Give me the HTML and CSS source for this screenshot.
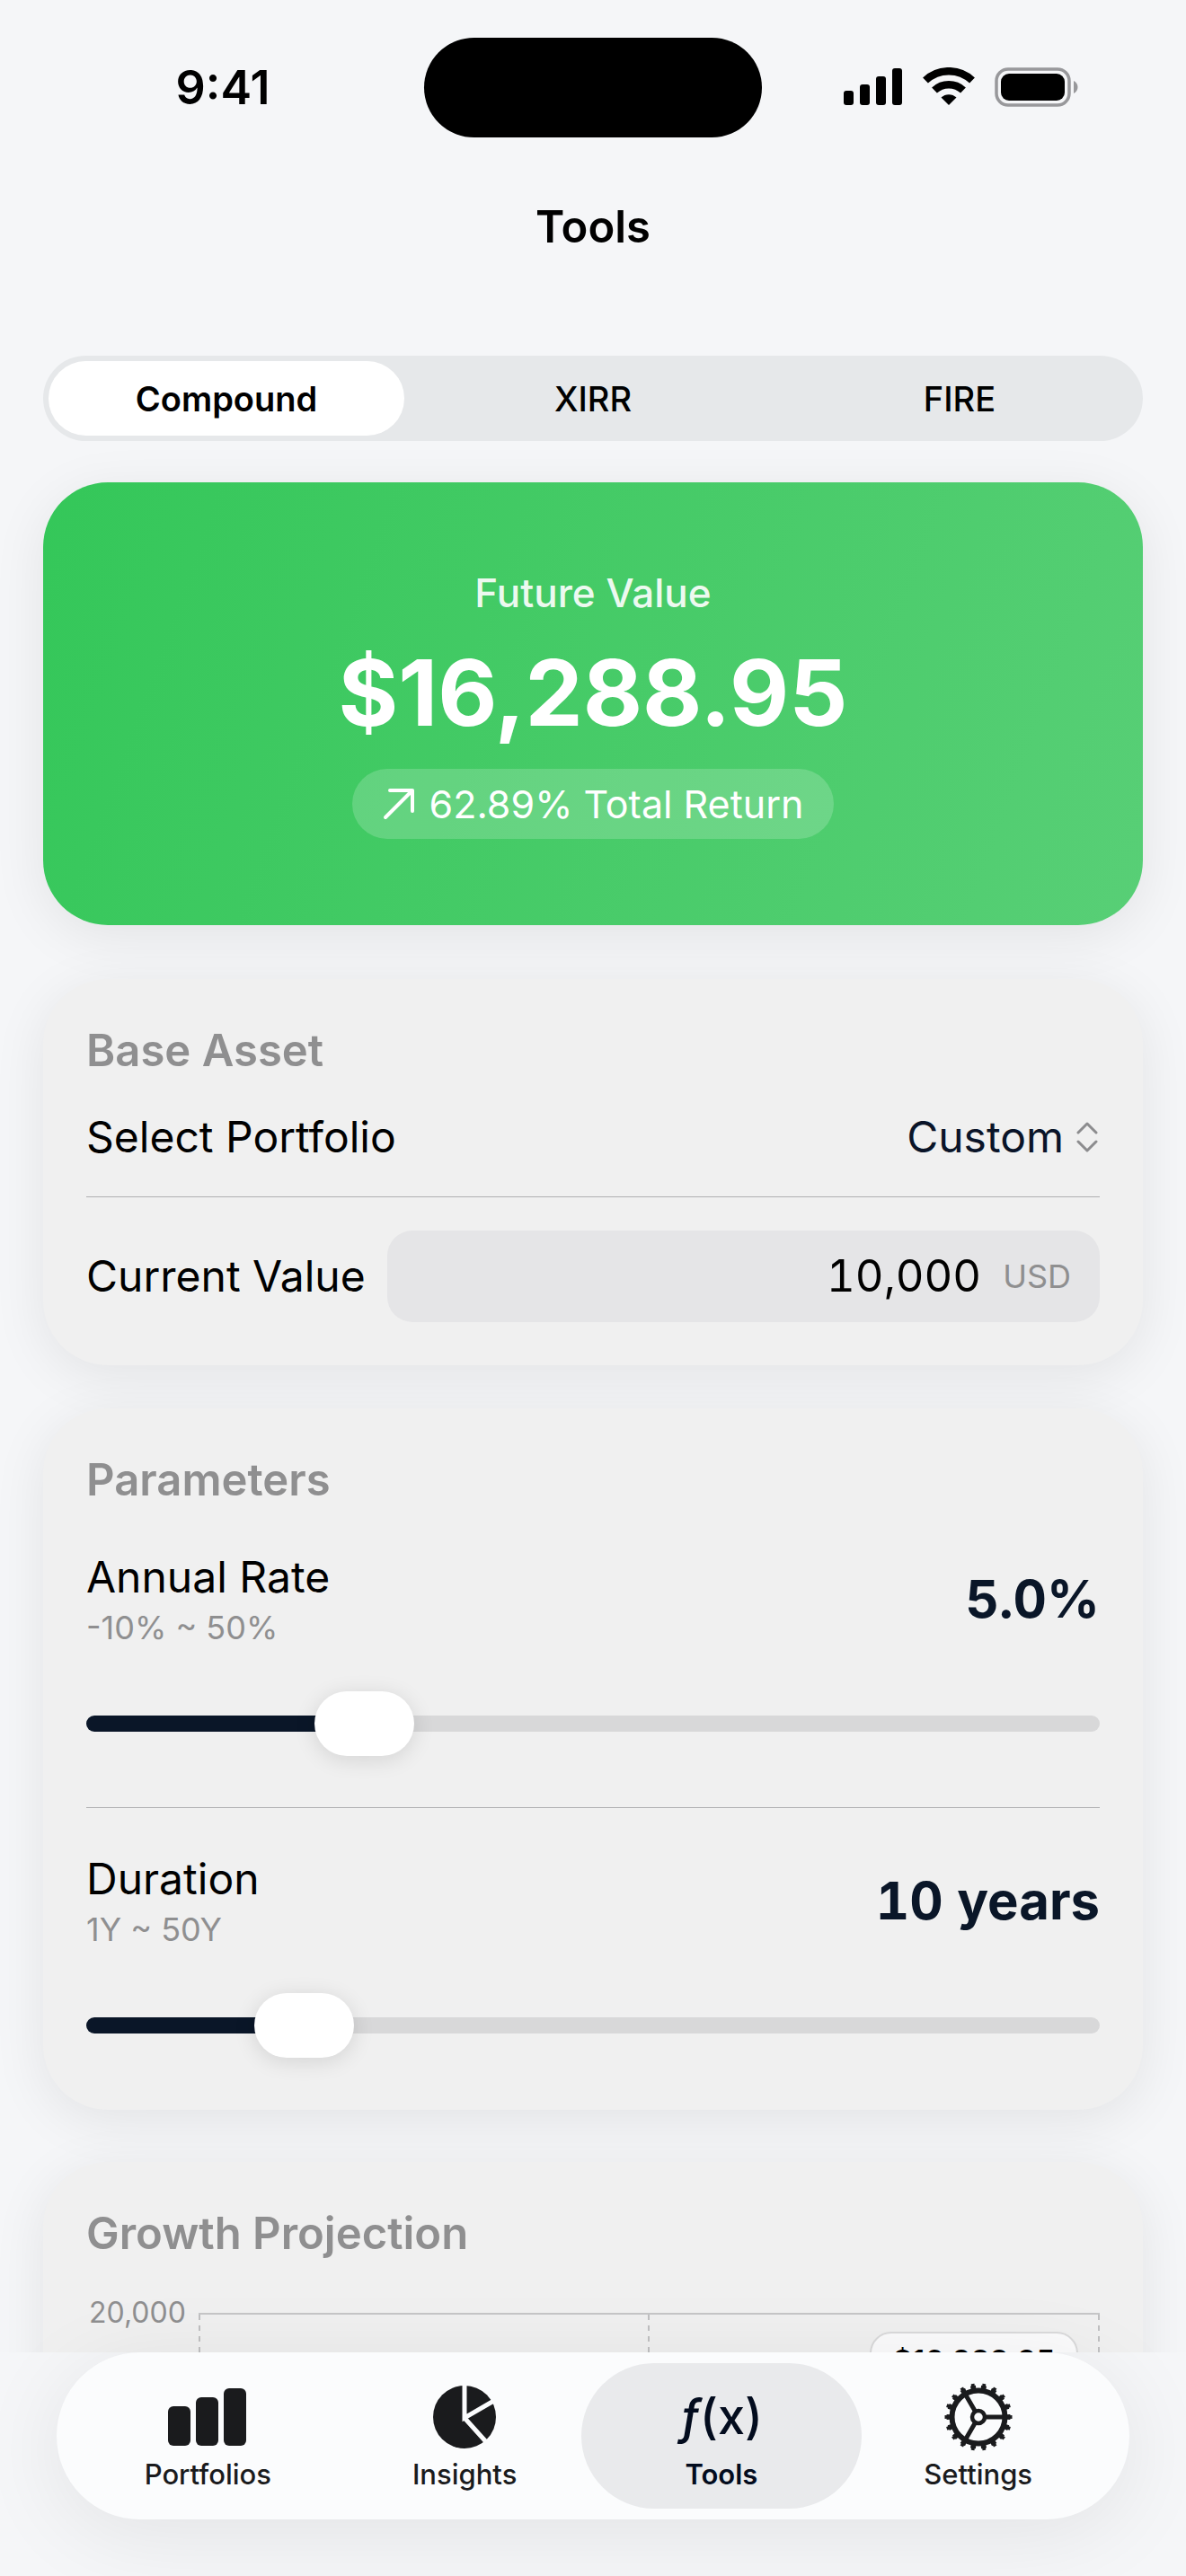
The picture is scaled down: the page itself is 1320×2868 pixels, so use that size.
FILE: index.html
```html
<!DOCTYPE html>
<html lang="en">
<head>
    <meta charset="UTF-8">
    <meta name="viewport" content="width=device-width, initial-scale=1">
    <title>Tools</title>
    <link rel="stylesheet" href="styles.css">
</head>
<body>
    <div class="screen">
        <div class="status-bar">
            <div class="status-time">9:41</div>
            <div class="island"></div>
            <div class="status-icons">
                <svg width="66" height="44" viewBox="0 0 66 44">
                    <rect x="0" y="26" width="11" height="16" rx="3"/>
                    <rect x="18" y="19" width="11" height="23" rx="3"/>
                    <rect x="36" y="10" width="11" height="32" rx="3"/>
                    <rect x="54" y="1" width="11" height="41" rx="3"/>
                </svg>
                <svg width="58" height="44" viewBox="0 0 58 44">
                    <path d="M3 14.5A38 38 0 0 1 55 14.5" fill="none" stroke="#000" stroke-width="8.5"/>
                    <path d="M13 25.5A23.500 23.500 0 0 1 45 25.500" fill="none" stroke="#000" stroke-width="8.5"/>
                    <path d="M29 42L20.500 33.500A12.500 12.500 0 0 1 37.500 33.500Z"/>
                </svg>
                <svg width="94" height="44" viewBox="0 0 94 44">
                    <rect x="2" y="2" width="81" height="40" rx="13" fill="none" stroke="#98989b" stroke-width="3.500"/>
                    <rect x="7" y="7" width="71" height="30" rx="9"/>
                    <path d="M88 15C94 18 94 26 88 29Z" fill="#98989b"/>
                </svg>
            </div>
        </div>

        <header class="title-bar">
            <h1>Tools</h1>
        </header>

        <main class="content">
            <div class="segmented">
                <button type="button" class="segment active">Compound</button>
                <button type="button" class="segment">XIRR</button>
                <button type="button" class="segment">FIRE</button>
            </div>

            <section class="result">
                <div class="result-label">Future Value</div>
                <div class="result-amount">$16,288.95</div>
                <div class="result-pill">
                    <svg width="36" height="36" viewBox="0 0 36 36">
                        <path d="M8 3H33V26M33 3L3 33" fill="none" stroke="#fff" stroke-width="4" stroke-linecap="round" stroke-linejoin="round"/>
                    </svg>
                    62.89% Total Return
                </div>
            </section>

            <section class="card base-asset">
                <h2>Base Asset</h2>
                <div class="row">
                    <label for="portfolio">Select Portfolio</label>
                    <div class="picker">
                        <select id="portfolio">
                            <option>Custom</option>
                        </select>
                        <svg width="24" height="34" viewBox="0 0 24 34">
                            <path d="M2 12L12 2L22 12M2 22L12 32L22 22" fill="none" stroke="#8c8c8e" stroke-width="3" stroke-linecap="round" stroke-linejoin="round"/>
                        </svg>
                    </div>
                </div>
                <hr>
                <div class="row">
                    <label for="currentValue">Current Value</label>
                    <div class="field">
                        <input type="text" id="currentValue" inputmode="decimal" value="10,000">
                        <span class="unit">USD</span>
                    </div>
                </div>
            </section>

            <section class="card parameters">
                <h2>Parameters</h2>
                <div class="row">
                    <div>
                        <label for="rate">Annual Rate</label>
                        <div class="range-text">-10% ~ 50%</div>
                    </div>
                    <output class="param-value" for="rate">5.0%</output>
                </div>
                <input type="range" id="rate" class="slider" min="-10" max="50" value="5" step="0.5" style="--pos: 0.25">
                <hr>
                <div class="row">
                    <div>
                        <label for="duration">Duration</label>
                        <div class="range-text">1Y ~ 50Y</div>
                    </div>
                    <output class="param-value" for="duration">10 years</output>
                </div>
                <input type="range" id="duration" class="slider" min="1" max="50" value="10" style="--pos: 0.184">
            </section>

            <section class="card projection">
                <h2>Growth Projection</h2>
                <div class="chart">
                    <div class="axis-label">20,000</div>
                    <div class="plot">
                        <div class="grid-line"></div>
                        <div class="grid-line"></div>
                        <div class="grid-line"></div>
                        <div class="tooltip">$16,288.95</div>
                    </div>
                </div>
            </section>
        </main>

        <nav class="tab-area">
            <div class="tab-bar">
                <a href="#portfolios" class="tab">
                    <svg width="88" height="76" viewBox="0 0 88 76">
                        <rect x="0" y="26" width="25" height="44" rx="6"/>
                        <rect x="31" y="16" width="25" height="54" rx="6"/>
                        <rect x="62" y="6" width="25" height="64" rx="6"/>
                    </svg>
                    <span>Portfolios</span>
                </a>
                <a href="#insights" class="tab">
                    <svg width="76" height="76" viewBox="0 0 76 76">
                        <circle cx="38" cy="38" r="35"/>
                        <path d="M38 0V39L74 18M38 39L65 69" fill="none" stroke="#fbfcfd" stroke-width="5"/>
                    </svg>
                    <span>Insights</span>
                </a>
                <a href="#tools" class="tab active">
                    <span class="fx"><i>ƒ</i>(x)</span>
                    <span>Tools</span>
                </a>
                <a href="#settings" class="tab">
                    <svg width="76" height="76" viewBox="0 0 76 76">
                        <g fill="none" stroke="currentColor">
                            <circle cx="38" cy="38" r="29.500" stroke-width="6"/>
                            <!-- 18 teeth, wide at the base and narrow at the tip -->
                            <circle cx="38" cy="38" r="33.500" stroke-width="4" pathLength="180" stroke-dasharray="5 5" stroke-dashoffset="2.500"/>
                            <circle cx="38" cy="38" r="36" stroke-width="3" pathLength="180" stroke-dasharray="3 7" stroke-dashoffset="1.500"/>
                            <circle cx="38" cy="38" r="7" stroke-width="4.500"/>
                            <path d="M46 38H66M34 31L24 13.800M34 45L24 62.200" stroke-width="5"/>
                        </g>
                    </svg>
                    <span>Settings</span>
                </a>
            </div>
        </nav>
    </div>

    <script>
        // keep the filled part of the track under the thumb
        document.querySelectorAll('.slider').forEach(slider => {
            slider.oninput = () => {
                const output = document.querySelector(`output[for="${slider.id}"]`);
                slider.style.setProperty('--pos', (slider.value - slider.min) / (slider.max - slider.min));
                output.textContent = slider.id === 'rate' ? `${Number(slider.value).toFixed(1)}%` : `${slider.value} years`;
            };
        });
    </script>
</body>
</html>
```

FILE: styles.css
```css
* { box-sizing: border-box; }
body { margin: 0; background-color: #f5f6f8; color: #000; font-family: Inter, "Liberation Sans", sans-serif; font-size: 48px; }
h1, h2 { margin: 0; font-size: 49px; font-weight: 600; }
button, input, select { font: inherit; color: inherit; border: none; padding: 0; margin: 0; background: none; }
svg { display: block; flex: none; }
.screen { display: flex; flex-direction: column; height: 100vh; overflow: hidden; }

/* status bar */
.status-bar { flex: none; display: grid; grid-template-columns: 1fr auto 1fr; align-items: center; height: 194px; }
.status-time { padding-left: 24px; text-align: center; font-size: 52px; font-weight: 600; }
.island { width: 376px; height: 111px; border-radius: 56px; background-color: #000; }
.status-icons { display: flex; justify-content: center; gap: 22px; padding-right: 28px; }
.title-bar { flex: none; height: 118px; line-height: 118px; text-align: center; }

.content { flex: 1; min-height: 0; overflow: hidden; padding: 84px 48px 0; }

.segmented { display: grid; grid-template-columns: repeat(3, 1fr); gap: 12px; height: 95px; padding: 6px; border-radius: 48px; background-color: #e6e8ea; }
.segment { border-radius: 42px; font-size: 38px; font-weight: 500; }
.segment.active { background-color: #fff; font-weight: 600; }

/* result card */
.result { display: flex; flex-direction: column; align-items: center; gap: 24px; margin-top: 46px; padding: 96px 48px; border-radius: 72px; background: linear-gradient(110deg, #34c759, #58cf76); box-shadow: 0 12px 60px rgba(0, 0, 0, 0.08); color: #fff; }
.result-label { font-size: 44px; font-weight: 500; line-height: 54px; opacity: 0.9; }
.result-amount { font-size: 102px; font-weight: 700; line-height: 121px; }
.result-pill { display: flex; align-items: center; gap: 16px; height: 78px; padding: 0 34px; border-radius: 39px; background-color: rgba(255, 255, 255, 0.18); font-size: 43px; }

.card { padding: 48px; border-radius: 72px; background-color: #f0f0f0; box-shadow: 0 12px 60px rgba(0, 0, 0, 0.08); line-height: 64px; }
.card h2 { color: #8f8f90; }
.card hr { height: 1px; margin: 0; border: none; background-color: #b0b0b2; }
.row { display: flex; align-items: center; justify-content: space-between; white-space: nowrap; }

.base-asset { margin-top: 60px; }
.base-asset h2 { margin-bottom: 32px; }
.base-asset hr { margin: 34px 0 37px; }
.picker { display: flex; align-items: center; gap: 14px; color: #0a1428; }
.picker select { appearance: none; field-sizing: content; text-align: right; }
.picker svg { margin-right: 2px; }
.field { flex: 1; display: flex; align-items: center; gap: 24px; min-width: 0; height: 102px; margin-left: 24px; padding: 0 32px; border-radius: 28px; background-color: #e5e5e7; }
.field input { flex: 1; min-width: 0; font-size: 49px; font-variant-numeric: tabular-nums; text-align: right; outline: none; }
.unit { color: #8f8f90; font-size: 36px; }

.parameters { margin-top: 48px; padding-bottom: 58px; }
.parameters h2 { margin-bottom: 44px; }
.parameters hr { margin: 57px 0 47px; }
.range-text { color: #8f8f90; font-size: 36px; line-height: 48px; }
.param-value { color: #0a1628; font-size: 58px; font-variant-numeric: tabular-nums; font-weight: 700; }

.slider { appearance: none; display: block; width: 100%; height: 72px; margin-top: 47px; }
.slider::-webkit-slider-runnable-track {
    --fill: calc(var(--pos) * (100% - 111px) + 56px);
    height: 18px;
    border-radius: 9px;
    background: linear-gradient(to right, #0a1628 var(--fill), #d8d8d9 var(--fill));
}
.slider::-webkit-slider-thumb { appearance: none; width: 111px; height: 72px; margin-top: -27px; border-radius: 36px; background-color: #fff; box-shadow: 0 4px 24px rgba(0, 0, 0, 0.12); }

.projection { margin-top: 58px; }
.chart { display: flex; gap: 14px; margin-top: 56px; }
.axis-label { height: 400px; margin-top: -32px; padding-left: 3px; color: #8f8f90; font-size: 32px; }
.plot { position: relative; flex: 1; display: flex; justify-content: space-between; height: 400px; border-top: 2px solid #c6c6c7; }
.grid-line { width: 2px; background: repeating-linear-gradient(#c0c0c1 0 6px, transparent 6px 12px); }
.tooltip { position: absolute; top: 19px; right: 24px; padding: 0 24px; border: 2px solid #dadadb; border-radius: 24px; background-color: #fbfbfc; font-size: 33px; font-weight: 600; line-height: 60px; }

/* bottom tabs */
.tab-area { position: relative; flex: none; padding: 0 63px 63px; background-color: #f5f6f8; }
.tab-bar { display: flex; padding: 12px 12px 12px 39px; border-radius: 93px; background-color: #fbfcfd; box-shadow: 0 16px 96px rgba(0, 0, 0, 0.08); }
.tab { flex: 1; display: flex; flex-direction: column; align-items: center; gap: 8px; height: 162px; margin-left: -27px; padding-top: 22px; border-radius: 81px; color: #1a1b1d; font-size: 31px; font-weight: 500; line-height: 36px; text-decoration: none; }
.tab svg { fill: currentColor; }
.tab.active { background-color: #e9eaec; color: #030c1e; font-weight: 600; }
.fx { height: 76px; font-size: 54px; font-weight: 500; line-height: 76px; }
```
